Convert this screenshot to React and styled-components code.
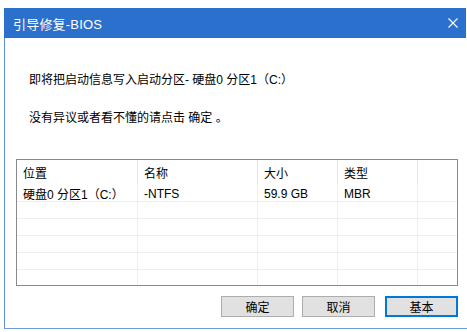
import styled, { createGlobalStyle } from "styled-components";

const GlobalStyle = createGlobalStyle`
  html, body {
    margin: 0;
    padding: 0;
    background: #ffffff;
  }
  body {
    font-family: "Liberation Sans", "Noto Sans CJK SC", sans-serif;
    font-size: 12px;
    color: #000;
    overflow: hidden;
  }
`;

const Window = styled.div`
  box-sizing: border-box;
  margin: 8px 0 0 4px;
  width: 480px;
  height: 321px;
  border-left: 1px solid #5b8fd6;
  border-bottom: 1px solid #6b9cdb;
  background: #fff;
  display: flex;
  flex-direction: column;
`;

const TitleBar = styled.div`
  height: 30px;
  background: #2b70cc;
  display: flex;
  align-items: center;
  padding-left: 8px;
  color: #fff;
  font-size: 13px;
  width: 462px;
  box-sizing: border-box;
  margin-left: -1px;
  padding-left: 9px;
`;

const Title = styled.span`
  flex: 1;
  letter-spacing: 0.2px;
`;

const Close = styled.svg`
  width: 10px;
  height: 10px;
  margin-right: 8px;
`;

const Body = styled.div`
  padding: 34px 0 0 24px;
  display: flex;
  flex-direction: column;
`;

const Message = styled.div`
  line-height: 16px;
  height: 16px;
  margin-top: ${(p) => p.$gap || 0}px;
  white-space: nowrap;
`;

const Table = styled.div`
  box-sizing: border-box;
  margin: 33px 0 0 -13px;
  width: 442px;
  height: 127px;
  border: 1px solid #8a8a8a;
  overflow: hidden;
`;

const cols = "121px 120px 80px 80px 1fr";

const HeadRow = styled.div`
  display: grid;
  grid-template-columns: ${cols};
  height: 25px;
`;

const HeadCell = styled.div`
  border-right: 1px solid #e6e6e6;
  padding-left: 6px;
  display: flex;
  align-items: center;
  &:last-child {
    border-right: none;
  }
`;

const Row = styled.div`
  box-sizing: border-box;
  display: grid;
  grid-template-columns: ${cols};
  height: 17px;
  border-bottom: 1px solid #efefef;
`;

const Cell = styled.div`
  border-right: 1px solid #efefef;
  padding-left: 6px;
  display: flex;
  align-items: center;
  white-space: nowrap;
  &:last-child {
    border-right: none;
  }
`;

const Buttons = styled.div`
  display: flex;
  justify-content: flex-end;
  width: 442px;
  margin: 10px 0 0 -13px;
  gap: 8px;
`;

const Button = styled.button`
  box-sizing: border-box;
  width: 73px;
  height: 21px;
  background: #e1e1e1;
  border: ${(p) => (p.$primary ? "2px solid #0078d7" : "1px solid #adadad")};
  font-family: "Noto Sans CJK SC", sans-serif;
  font-size: 12px;
  color: #000;
  padding: 0;
  display: flex;
  align-items: center;
  justify-content: center;
  margin-left: ${(p) => (p.$primary ? 2 : 0)}px;
`;

const headers = ["位置", "名称", "大小", "类型", ""];
const rows = [
  ["硬盘0 分区1（C:）", "-NTFS", "59.9 GB", "MBR", ""],
  ["", "", "", "", ""],
  ["", "", "", "", ""],
  ["", "", "", "", ""],
  ["", "", "", "", ""],
  ["", "", "", "", ""],
];

export default function App() {
  return (
    <>
      <GlobalStyle />
      <Window>
        <TitleBar>
          <Title>引导修复-BIOS</Title>
          <Close viewBox="0 0 10 10">
            <path d="M0.5 0.5 L9.5 9.5 M9.5 0.5 L0.5 9.5" stroke="#fff" strokeWidth="1.1" fill="none" />
          </Close>
        </TitleBar>
        <Body>
          <Message>即将把启动信息写入启动分区- 硬盘0 分区1（C:）</Message>
          <Message $gap={22}>没有异议或者看不懂的请点击 确定 。</Message>
          <Table>
            <HeadRow>
              {headers.map((h, i) => (
                <HeadCell key={i}>{h}</HeadCell>
              ))}
            </HeadRow>
            {rows.map((r, i) => (
              <Row key={i}>
                {r.map((c, j) => (
                  <Cell key={j}>{c}</Cell>
                ))}
              </Row>
            ))}
          </Table>
          <Buttons>
            <Button>确定</Button>
            <Button>取消</Button>
            <Button $primary>基本</Button>
          </Buttons>
        </Body>
      </Window>
    </>
  );
}
